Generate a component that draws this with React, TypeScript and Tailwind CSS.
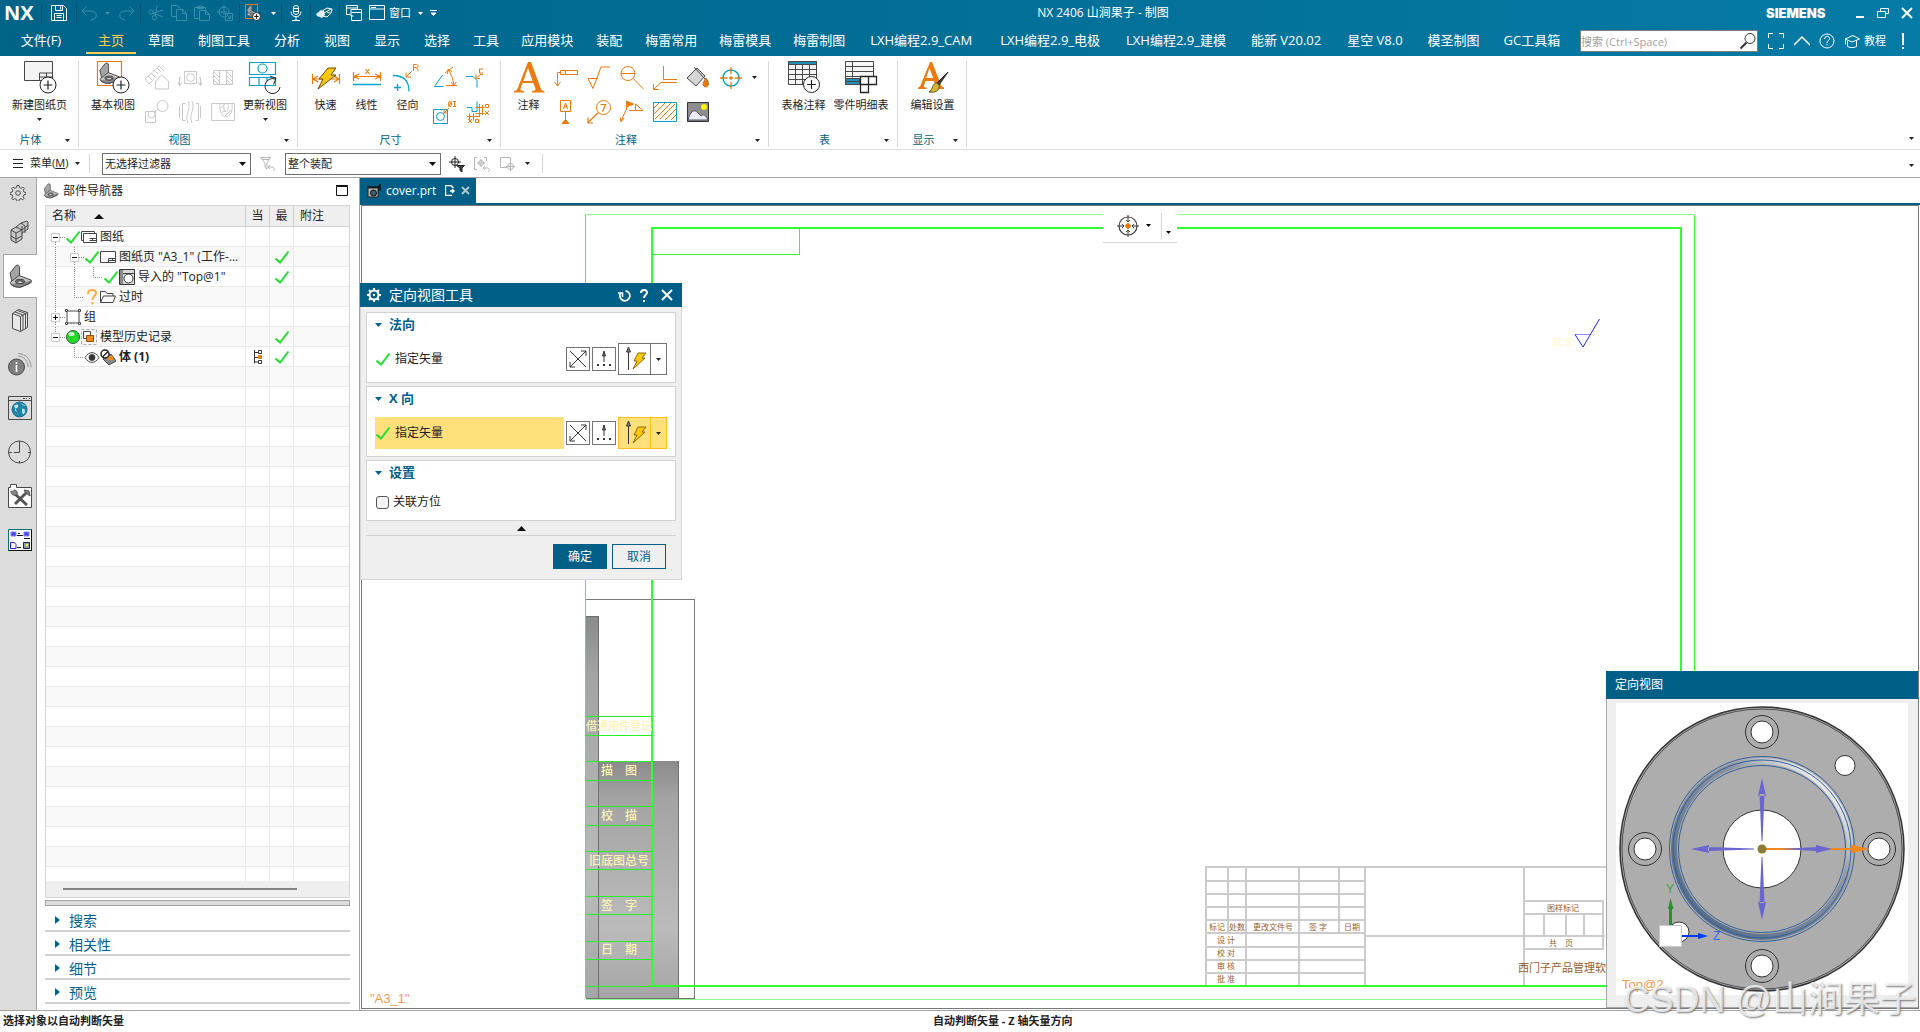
import type { ReactNode } from "react";
import clsx from "clsx";

const ORANGE = "#ec7a0c";
const CYAN = "#00a3cc";
const DARK = "#464646";
const GREEN = "#2fff2f";

type IconProps = { w: number; h?: number; className?: string; children: ReactNode };

function Icon({ w, h = w, className, children }: IconProps) {
  return (
    <svg
      width={w}
      height={h}
      viewBox={`0 0 ${w} ${h}`}
      fill="none"
      stroke="currentColor"
      aria-hidden="true"
      className={clsx("block shrink-0", className)}
    >
      {children}
    </svg>
  );
}

function Caret({ className }: { className?: string }) {
  return (
    <Icon w={5} h={3} className={className}>
      <path d="M0 0h5L2.500 3z" fill="currentColor" stroke="none" />
    </Icon>
  );
}

function Check() {
  return (
    <Icon w={16} className="text-[#25dd32]">
      <path d="M1.500 9.500l4.500 4L14.500 2.500" strokeWidth="2" />
    </Icon>
  );
}

/* Grey sheet metal bracket, used all over the place */
function PartShape() {
  return (
    <g stroke="#444" strokeWidth="1">
      <path d="M2 9L8 1.500c2-1 3.500 0 3.500 2V12L4 18z" fill="#a4a4a4" />
      <path d="M4 17l7-5.500 12 4.500c1 2 0 3-1.500 3.500L13 23c-4 .5-8-.5-10-2.500C1.500 18.500 2.500 17.500 4 17z" fill="#c4c4c4" />
      <path d="M3 20c3 3 7 3.500 10 3l9-4v-2" fill="#8a8a8a" />
      <ellipse cx="12" cy="17.500" rx="4.500" ry="2.200" fill="#777" />
      <ellipse cx="12" cy="18.200" rx="3" ry="1.300" fill="#e6e6e6" />
    </g>
  );
}

function PartIcon({ size }: { size: number }) {
  return (
    <svg width={size} height={size} viewBox="0 0 25 25" aria-hidden="true" className="block shrink-0">
      <PartShape />
    </svg>
  );
}

function PlusBadge({ x, y, r = 8 }: { x: number; y: number; r?: number }) {
  return (
    <g stroke="#222">
      <circle cx={x} cy={y} r={r} fill="#fff" />
      <path d={`M${x - r * 0.55} ${y}h${r * 1.1}M${x} ${y - r * 0.55}v${r * 1.1}`} strokeWidth="1.200" />
    </g>
  );
}

function Bolt() {
  return <path d="M15 1h8l-5 7h5L5 22l5-10H6z" fill="#fdc70c" stroke="#6b4a00" />;
}

/* ---------- title bar ---------- */

function Sep() {
  return <div className="h-[19px] w-px bg-[#00506f]" />;
}

type QuickProps = { label: string; className: string; disabled?: boolean; children: ReactNode };

function Quick({ label, className, disabled, children }: QuickProps) {
  return (
    <button
      type="button"
      aria-label={label}
      disabled={disabled}
      className={clsx("flex h-6 items-center justify-center", disabled && "text-[#3a8fae]", className)}
    >
      {children}
    </button>
  );
}

function TitleBar() {
  return (
    <div className="flex h-[26px] items-center">
      <div className="w-[41px] pl-1 text-[20px] leading-6 font-bold">NX</div>
      <Sep />
      <Quick label="保存" className="w-[34px]">
        <Icon w={16}>
          <path d="M.5.5h12l3 3v12H.5zM4.500.5v5h7v-5M9.500 1.500v3M3.500 15.500v-7h9v7M5.500 10.500h5M5.500 12.500h5" />
        </Icon>
      </Quick>
      <Sep />
      <Quick label="撤销" className="w-6" disabled>
        <Icon w={16}>
          <path d="M5.500 1.500L1 6l4.500 4.500M1 6h9c7 0 7 8.500 0 9" />
        </Icon>
      </Quick>
      <Quick label="撤销列表" className="w-3" disabled>
        <Caret />
      </Quick>
      <Quick label="重做" className="w-[27px]" disabled>
        <Icon w={16}>
          <path d="M10.500 1.500L15 6l-4.500 4.500M15 6H6c-7 0-7 8.500 0 9" />
        </Icon>
      </Quick>
      <Sep />
      <div className="flex w-[98px] justify-center">
        <Quick label="剪切" className="w-[23px]" disabled>
          <Icon w={16}>
            <circle cx="3" cy="7" r="2.200" />
            <circle cx="6.500" cy="12.500" r="2.200" />
            <path d="M4.500 8.500L15.500 5M7 10.500L9.500 0M5 8l10 4" />
          </Icon>
        </Quick>
        <Quick label="复制" className="w-[23px]" disabled>
          <Icon w={16}>
            <path d="M5.500 11.500h-5V.5h6l3 3v1M5.500 4.500h6l4 4v7h-10zM11.500 4.500v4h4" />
          </Icon>
        </Quick>
        <Quick label="粘贴" className="w-[23px]" disabled>
          <Icon w={16}>
            <path d="M5.500 13.500h-5v-11h11v3M3.500 3.500v-2h2c0-1.500 2-1.500 2 0h2v2zM5.500 5.500h6l4 4v6h-10zM11.500 5.500v4h4" />
          </Icon>
        </Quick>
        <Quick label="移动对象" className="w-[23px]" disabled>
          <Icon w={16}>
            <circle cx="7" cy="7" r="5" />
            <path d="M7 0v10M0 7h10M8.500 8.500h7v7h-7zM10.500 10.500l3 3m0-3v3h-3" />
          </Icon>
        </Quick>
      </div>
      <Sep />
      <Quick label="基本视图" className="w-[25px]">
        <Icon w={18}>
          <path d="M1.500.5h12v14h-12z" stroke={ORANGE} />
          <g transform="translate(2 1) scale(.5)">
            <PartShape />
          </g>
          <PlusBadge x={12.500} y={12.500} r={4} />
        </Icon>
      </Quick>
      <Quick label="基本视图列表" className="w-4">
        <Caret />
      </Quick>
      <Sep />
      <Quick label="语音" className="w-7">
        <Icon w={14} h={16}>
          <rect x="4.500" y=".5" width="5" height="9" rx="2.500" />
          <path d="M2 6.500c0 7 10 7 10 0M7 12v3.500M3 15.500h8M5 3.500h4M5 6.500h4" />
        </Icon>
      </Quick>
      <Sep />
      <Quick label="触控模式" className="w-7">
        <Icon w={18} h={14}>
          <path d="M0 8l5-4 3 1 1 4-3 3-5-2z" fill="#dfe8ec" stroke="none" />
          <path d="M7 4.500l4-2.500 5 1-1 4-4 4-4-1z M8 7l7-4M11 6l3 1" />
        </Icon>
      </Quick>
      <Sep />
      <Quick label="切换窗口" className="w-7">
        <Icon w={16}>
          <path d="M4.500 9.500h-4v-9h11v4M.5 3h11M7.500 11H5v-6.500h10.500v11h-10v-5M5.500 7.500h10" />
        </Icon>
      </Quick>
      <button type="button" className="flex w-[58px] items-center gap-1 pl-px text-[11px] leading-4">
        <Icon w={16}>
          <path d="M.5.5h15v14H.5zM.5 4h15M2 2.500h5" />
        </Icon>
        窗口
        <Caret className="ml-[3px]" />
      </button>
      <Quick label="自定义工具条" className="w-[14px]">
        <Icon w={7} h={6}>
          <path d="M0 .5h7M1 3h5L3.500 5.500z" fill="currentColor" />
        </Icon>
      </Quick>
      <h1 className="flex-1 text-center text-[12px] leading-5">NX 2406 山涧果子 - 制图</h1>
      <div className="w-[88px] text-[13px] leading-5 font-black [font-family:Inter,'Open_Sans',sans-serif]">SIEMENS</div>
      <Quick label="最小化" className="w-3">
        <Icon w={8} h={10}>
          <path d="M0 9h8" strokeWidth="2" />
        </Icon>
      </Quick>
      <Quick label="还原" className="w-[34px]">
        <Icon w={12} h={10}>
          <path d="M3.500 3V.5h8v5H9M.5 3.500h8v6h-8z" />
        </Icon>
      </Quick>
      <Quick label="关闭" className="mr-[7px] w-[13px]">
        <Icon w={12}>
          <path d="M1 1l10 10M11 1L1 11" strokeWidth="2" />
        </Icon>
      </Quick>
    </div>
  );
}

type Tab = { name: string; pad: string };

const tabs: Tab[] = [
  { name: "主页", pad: "px-3" },
  { name: "草图", pad: "px-3" },
  { name: "制图工具", pad: "px-3" },
  { name: "分析", pad: "px-3" },
  { name: "视图", pad: "px-3" },
  { name: "显示", pad: "px-3" },
  { name: "选择", pad: "px-3" },
  { name: "工具", pad: "px-[11px]" },
  { name: "应用模块", pad: "px-[11px]" },
  { name: "装配", pad: "px-3" },
  { name: "梅雷常用", pad: "px-[11px]" },
  { name: "梅雷模具", pad: "px-[11px]" },
  { name: "梅雷制图", pad: "px-[11px]" },
  { name: "LXH编程2.9_CAM", pad: "px-[14px]" },
  { name: "LXH编程2.9_电极", pad: "px-[14px]" },
  { name: "LXH编程2.9_建模", pad: "px-3" },
  { name: "能新 V20.02", pad: "px-[13px]" },
  { name: "星空 V8.0", pad: "px-[13px]" },
  { name: "模圣制图", pad: "px-3" },
  { name: "GC工具箱", pad: "px-3" },
];

function MenuRow() {
  return (
    <div className="flex h-[30px] items-start whitespace-nowrap text-[13px]">
      <button type="button" className="h-[28px] w-[86px] pr-1 leading-[28px]">
        文件(F)
      </button>
      <nav className="flex flex-1">
        {tabs.map(({ name, pad }) => (
          <button
            key={name}
            type="button"
            className={clsx(
              "h-[28px] border-b-2 leading-[28px]",
              pad,
              name === "主页" ? "border-[#ffcc4d] text-[#ffcc4d]" : "border-transparent",
            )}
          >
            {name}
          </button>
        ))}
      </nav>
      <div className="relative mt-1 w-[178px] shrink-0 text-[#333]">
        <input
          type="text"
          aria-label="搜索"
          placeholder="搜索 (Ctrl+Space)"
          className="block h-[22px] w-full border border-[#7d7d7d] bg-white text-[11px] leading-5 placeholder:text-[#9f9f9f]"
        />
        <Icon w={18} className="absolute top-[2px] right-[1px]">
          <circle cx="11" cy="6.500" r="5" />
          <path d="M7.500 10.500L1.500 16.500" strokeWidth="2" />
        </Icon>
      </div>
      <Quick label="全屏" className="mt-[3px] w-[36px]">
        <Icon w={16}>
          <path d="M5 .5H.5V5M11 .5h4.500V5M.5 11v4.500H5M15.500 11v4.500H11" />
        </Icon>
      </Quick>
      <Quick label="最小化功能区" className="mt-[3px] w-4">
        <Icon w={16} h={10}>
          <path d="M0 9l8-8 8 8" strokeWidth="1.500" />
        </Icon>
      </Quick>
      <Quick label="帮助" className="mt-[3px] w-[34px]">
        <Icon w={16}>
          <circle cx="8" cy="8" r="7" />
          <path d="M5.500 6c0-3.500 5-3.500 5-.5 0 2-2.500 2-2.500 4.500M8 11v1.500" />
        </Icon>
      </Quick>
      <button type="button" className="mt-[3px] flex h-6 items-center gap-1 text-[11px]">
        <Icon w={16} h={14}>
          <path d="M1 5l8-3.500L15.500 5 8 8zM3.500 7v5.500c3 1.500 6 1.500 9 0V6.500M1.500 5.500v5" />
        </Icon>
        教程
      </button>
      <Quick label="提醒" className="mt-[3px] w-[34px]">
        <Icon w={2} h={16}>
          <path d="M1 0v12M1 14v2" strokeWidth="2" />
        </Icon>
      </Quick>
    </div>
  );
}

/* ---------- ribbon ---------- */

type BigProps = { label: string; className: string; caret?: boolean; children: ReactNode };

function Big({ label, className, caret, children }: BigProps) {
  return (
    <button type="button" className={clsx("flex flex-col items-center text-[11px] whitespace-nowrap", className)}>
      <Icon w={34}>{children}</Icon>
      <span className="leading-[20px]">{label}</span>
      {caret && <Caret className="mt-[3px]" />}
    </button>
  );
}

function Small({ label, children }: { label: string; children: ReactNode }) {
  return (
    <button type="button" aria-label={label} className="flex h-[34px] w-[33px] items-center justify-center">
      <Icon w={24}>{children}</Icon>
    </button>
  );
}

function Group({ title, children }: { title: string; children: ReactNode }) {
  return (
    <section className="flex h-[86px] flex-col justify-between border-r border-[#d9d9d9]">
      <div className="flex h-[70px] items-start pr-[6px] pl-[7px]">{children}</div>
      <div className="flex h-[14px] items-center pl-[5px] text-[11px] leading-[14px]">
        <h2 className="flex-1 text-center text-[#00607f]">{title}</h2>
        <button type="button" aria-label={`${title}选项`} className="flex w-[22px] items-center justify-center">
          <Caret />
        </button>
      </div>
    </section>
  );
}

function Ribbon() {
  return (
    <div className="flex h-[94px] items-start border-b border-[#dcdcdc] bg-white pt-[5px] text-[#222]">
      <Group title="片体">
        <Big label="新建图纸页" className="w-[65px]" caret>
          <path d="M1.500.5h28v19h-28z" fill="#f4f4f4" stroke={DARK} />
          <path d="M16.500 12h13M16.500 16h13M16.500 12v7M23.500 12v4" stroke={DARK} />
          <PlusBadge x={25} y={24} />
        </Big>
      </Group>

      <Group title="视图">
        <Big label="基本视图" className="w-[54px]">
          <path d="M1.500.5h24v24h-24z" stroke={ORANGE} strokeWidth="1.200" />
          <g transform="translate(2 1) scale(.92)">
            <PartShape />
          </g>
          <PlusBadge x={25} y={24} />
        </Big>
        <div className="grid grid-cols-3 text-[#c9c9c9]">
          <Small label="投影视图">
            <path d="M0 13L14 0l5 5M0 13l4 5 5-5M3 10l4 4M6 7l4 4M9 4l4 4M12 2l4 4M10.500 15l6-6 7 6v8h-13z" />
          </Small>
          <Small label="剖视图">
            <path d="M6.500 5.500h12v12h-12zM3 11.500H1.500v8M0 16l1.500 4 2.500-4M21 11.500h1.500v8M20 16l2.500 4 1.500-4" />
            <circle cx="12.500" cy="11.500" r="4" />
          </Small>
          <Small label="局部剖">
            <path d="M2.500 4.500h19v14h-19zM8.500 4.500v14M15.500 4.500v14M3 6l5 5M3 10l5 5M3 14l4 4M16 6l5 5M16 10l5 5M16 14l4 4" />
          </Small>
          <Small label="局部放大图">
            <circle cx="17.500" cy="6" r="5.500" />
            <circle cx="6.500" cy="14.500" r="3.500" />
            <path d="M.5 11.500h10v11H.5zM9 12l5-3" />
          </Small>
          <Small label="断开视图">
            <path d="M1.500 6v12M4.500 3.500v17M4.500 3.500h3M4.500 20.500h3M10 1c4 7-4 14 0 22M14 1c4 7-4 14 0 22M18 3.500h2.500v17H18M22.500 6v12" />
          </Small>
          <Small label="局部剖视图">
            <path d="M.5 3.500h23v17H.5zM9 3.500c-1 8 2 13 6 13s7-5 6-13M13 4c-1 6 1 8 2 8s3-3 2-8M10 8l4-4M11 12l4-1M14 16l6-6" />
          </Small>
        </div>
        <Big label="更新视图" className="w-[52px]" caret>
          <g stroke={CYAN} strokeWidth="1.200">
            <path d="M1.500 1.500h26v12h-26zM1.500 16.500h26v8h-26zM11 16.500v8M19 16.500v4" />
            <circle cx="14.500" cy="7.500" r="4.500" />
          </g>
          <path d="M27 18a7.500 7.500 0 1 0 5 8" fill="none" stroke="#222" />
          <path d="M22 15l6 2.500-2.500 6" stroke="#222" />
        </Big>
      </Group>

      <Group title="尺寸">
        <Big label="快速" className="w-[41px]">
          <path d="M3.500 13v10M30.500 13v10M4 18h26M9 15l-5 3 5 3M25 15l5 3-5 3" stroke={ORANGE} strokeWidth="1.200" />
          <g transform="translate(4 6)">
            <Bolt />
          </g>
        </Big>
        <Big label="线性" className="w-[41px]">
          <path
            d="M3.500 11v9M30.500 11v9M4 15.500h26M9 13l-5 2.500L9 18M25 13l5 2.500-5 2.500M15.500 8l4 5M19.500 8l-4 5"
            stroke={ORANGE}
            strokeWidth="1.200"
          />
          <path d="M3 23.500h28" stroke={CYAN} strokeWidth="1.500" />
        </Big>
        <Big label="径向" className="w-[41px]">
          <path d="M2 14.500c10 0 16 5 16 16M3 26.500h7M6.500 23v7" stroke={CYAN} strokeWidth="1.300" />
          <path d="M21 10l-6 6M15 11.500V16h5M22.500 10V3.500h3c2 0 2 3 0 3h-3M25.500 6.500l2 3.500" stroke={ORANGE} />
        </Big>
        <div className="grid grid-cols-2">
          <Small label="角度尺寸">
            <path d="M9.500 9L1.500 20.500h9" stroke={CYAN} />
            <path d="M12 7l8-6M15 3.500c3 4 5 9 6 16M14.500 8l.5-4.500 4 2M13 19.500h11M18 16l3 4 2-4" stroke={ORANGE} />
          </Small>
          <Small label="倒斜角尺寸">
            <path d="M0 10.500h7l4 4v7" stroke={CYAN} />
            <path d="M17 8.500h-3l-4 4M10 8.500v4h4M17 3h-3.500v4H17" stroke={ORANGE} />
          </Small>
          <Small label="厚度尺寸">
            <path d="M.5 9.500h14v14H.5z" stroke={CYAN} />
            <circle cx="7.500" cy="16.500" r="4" stroke={CYAN} />
            <path d="M11 13l5-5M11 9v4h4M20 1.500h3M21.500 1.500v5M20 6.500h3M15.500 6.500l3.500-5" stroke={ORANGE} />
            <ellipse cx="17" cy="4" rx="1.500" ry="2.500" stroke={ORANGE} />
          </Small>
          <Small label="坐标尺寸">
            <path d="M1 7.500h5v4h5v-10" stroke={CYAN} />
            <path
              d="M9.500 7.500h9M9.500 13.500h9M13.500 4v13M16.500 5v10M1 16.500h12M3.500 13.500v7M7.500 13.500v7M2 19l4 4M6 19l-4 4M9.500 19.500h3v3h-3zM19.500 4.500h3v3h-3zM19 11l4 4M23 11l-4 4"
              stroke={ORANGE}
            />
          </Small>
        </div>
      </Group>

      <Group title="注释">
        <Big label="注释" className="w-[41px]">
          <path
            d="M16 1h3l10 27c.6 1.500 1.500 2 3.500 2v1.500H20V30c3 0 4-.7 3.300-2.700l-2-5.300H10.500l-1.800 5c-.7 2 0 3 3.300 3v1.500H2V30c2 0 3-1 4-3.500zM16 7l-4.700 13h9.300z"
            fill={ORANGE}
            stroke="none"
          />
        </Big>
        <div className="grid grid-cols-6 text-[#ec7a0c]">
          <Small label="特征控制框">
            <path d="M6.500 4.500h17v4h-17zM11.500 4.500v4M6.500 6.500h-3v13M.5 16l3 4 3-4" />
          </Small>
          <Small label="表面粗糙度">
            <path d="M1 12.500h10M1 12.500l5 10 8-21.500h9" />
          </Small>
          <Small label="剖切线">
            <circle cx="8" cy="7.500" r="7" />
            <path d="M1 7.500h14M13 12.500L24 23.500" />
          </Small>
          <Small label="焊接符号">
            <path d="M10.500 0v13.500h13.500M24 16.500H8L.5 23.500M.5 18v5.500H6" />
          </Small>
          <Small label="区域填充">
            <path d="M1 12L11 2l8 8-9 10z" fill="#d5d5d5" stroke={DARK} />
            <path d="M8 1l11 12" stroke={DARK} />
            <path d="M20 12c-6 8-1 9 0 9s5-2 0-9z" fill={ORANGE} stroke="#a85a10" strokeWidth=".8" />
          </Small>
          <Small label="中心标记">
            <circle cx="12" cy="12" r="8" stroke={CYAN} strokeWidth="1.500" />
            <path d="M12 1v7M12 16v7M1 12h7M16 12h7M12 10v4M10 12h4" strokeWidth="1.300" />
          </Small>
          <Small label="基准特征符号">
            <path d="M6.500.5h10v11h-10zM11.500 12v9M9.500 9l2-6 2 6M10 7h3" />
            <path d="M8 23.500l3.500-4 3.500 4z" fill={ORANGE} />
          </Small>
          <Small label="符号标注">
            <circle cx="16.500" cy="7.500" r="7" />
            <path d="M13.500 4.500h5l-3 7M11.500 12.500L1 22.500M1 17.500v5.500h5" strokeWidth="1.200" />
          </Small>
          <Small label="相交符号">
            <path d="M6.500 1v8L1 21M0 17l1 5 3-4M9 10.500h14L15.500 4v6" />
            <path d="M6.500 1l7 3-7 3z" fill={ORANGE} />
          </Small>
          <Small label="剖面线">
            <path d="M1 8l5-5M1 14L12 3M2 19L18 3M7 19L22 4M12 20L23 9M18 20l5-5" />
            <path d="M.5 2.500h23v19H.5z" stroke={CYAN} />
          </Small>
          <Small label="图像">
            <path d="M1.500 2.500h21v19h-21z" fill="#8d8d8d" stroke="#333" />
            <circle cx="18" cy="7" r="3" fill="#fff200" stroke="none" />
            <path d="M2 20c2-8 6-12 10-7l3 3c3-3 5 0 7 4z" fill="#e8ecf4" stroke="#556" />
          </Small>
        </div>
        <button type="button" aria-label="更多注释" className="flex h-[32px] w-[15px] items-center justify-center">
          <Caret />
        </button>
      </Group>

      <Group title="表">
        <Big label="表格注释" className="w-[55px]">
          <path d="M1.500.5h28v23h-28zM1.500 8.500h28M1.500 13.500h28M1.500 18.500h28M8.500 4v19M15.500 4v19M22.500 4v19" stroke={DARK} fill="#f6f6f6" />
          <path d="M1.500.5h28v3h-28z" fill="#2390b5" stroke={DARK} />
          <PlusBadge x={24.500} y={23.500} />
        </Big>
        <Big label="零件明细表" className="w-[60px]">
          <path d="M1.500.5h28v23h-28zM1.500 5.500h28M1.500 10.500h28M1.500 15.500h28M8.500.5v16" stroke={DARK} fill="#f6f6f6" />
          <path d="M1.500 17.500h14v6h-14zM1.500 20.500h14" fill="#2390b5" stroke={DARK} />
          <path d="M16.500 15.500h16v8h-8v8h-8zM16.500 23.500h8M24.500 15.500v8" fill="#fff" stroke="#222" strokeWidth="1.300" />
        </Big>
      </Group>

      <Group title="显示">
        <Big label="编辑设置" className="w-[55px]">
          <path
            d="M14 1h2l9 23c.5 1.500 1 2 3 2.500v1.500H17v-1.500c2.500 0 3-.5 2.500-2.300l-1.700-4.200H9.500l-1.300 4c-.7 2 0 2.500 2.300 2.500v1.500H2v-1.500c1.500-.2 2-.7 2.700-2.500zM13.500 7l-3.300 10h7z"
            fill={ORANGE}
            stroke="none"
          />
          <path d="M32 11L21 22l2 2z" fill="#444" stroke="#222" />
          <path d="M21 22c-5 0-4 7-8 9 6 1 11-1 10-7z" fill="#d8b33c" stroke="#6b5513" />
        </Big>
      </Group>
      <div className="flex h-[84px] flex-1 items-end justify-end pr-[6px] pb-[5px]">
        <Caret />
      </div>
    </div>
  );
}

/* ---------- selection bar ---------- */

function Filter({ label, options, className }: { label: string; options: string[]; className: string }) {
  return (
    <div className={clsx("relative", className)}>
      <select
        aria-label={label}
        className="block h-[22px] w-full appearance-none border border-[#6e6e6e] bg-white pl-[2px] text-[11px] leading-5"
      >
        {options.map((o) => (
          <option key={o}>{o}</option>
        ))}
      </select>
      <Icon w={7} h={4} className="pointer-events-none absolute top-[9px] right-[5px]">
        <path d="M0 0h7L3.500 4z" fill="#111" stroke="none" />
      </Icon>
    </div>
  );
}

function SelectionBar() {
  return (
    <div className="flex h-7 items-center border-b border-[#a5a5a5] bg-white text-[11px] text-[#222]">
      <button type="button" className="flex w-[89px] items-center gap-[7px] pl-[13px]">
        <Icon w={10} h={9}>
          <path d="M0 .5h10M0 4.500h10M0 8.500h10" />
        </Icon>
        <span>
          菜单(<u>M</u>)
        </span>
        <Caret />
      </button>
      <div className="h-[19px] w-px bg-[#d5d5d5]" />
      <Filter label="类型过滤器" options={["无选择过滤器"]} className="ml-3 w-[149px]" />
      <button type="button" aria-label="重置过滤器" className="flex w-[34px] justify-center text-[#b5b5b5]">
        <Icon w={18} h={16}>
          <path d="M1.500 1.500h10L8 7v6l-2-1.500V7zM3 3.500h7M11 9l-2 2 2 2M9 11h4c3 0 3 4 1 4" />
        </Icon>
      </button>
      <Filter label="选择范围" options={["整个装配"]} className="w-[156px]" />
      <div className="flex items-center gap-[9px] pl-2 text-[#b5b5b5]">
        <button type="button" aria-label="选择优先级" className="text-[#222]">
          <Icon w={16}>
            <circle cx="6" cy="6" r="3.500" />
            <path d="M6 0v12M0 6h12" />
            <path d="M7.500 9.500h8L13 12v4l-2-1.500V12z" fill="#444" />
          </Icon>
        </button>
        <button type="button" aria-label="面选择">
          <Icon w={17} h={16}>
            <path d="M3 1.500H.5v12H3M10 1.500h2.500V5M7 3v8M3 7h8M11 10l-2 2 2 2M9 12h4c3 0 3 3 1 4" />
            <circle cx="7" cy="7" r="2.500" />
          </Icon>
        </button>
        <button type="button" aria-label="捕捉点">
          <Icon w={16}>
            <path d="M7 11.500H.5v-10h10V6M10.500 6v9M6 10.500h9" />
            <circle cx="10.500" cy="10.500" r="3" />
          </Icon>
        </button>
        <Caret className="text-[#222]" />
      </div>
      <div className="ml-[12px] h-[19px] w-px bg-[#d5d5d5]" />
      <Caret className="mt-1 mr-[6px] ml-auto" />
    </div>
  );
}

/* ---------- resource bar ---------- */

function RailButton({ label, active, children }: { label: string; active?: boolean; children: ReactNode }) {
  return (
    <button
      type="button"
      aria-label={label}
      className={clsx(
        "flex h-11 items-center",
        active ? "relative -mr-px ml-[3px] border-y border-l border-[#a5a5a5] bg-white pl-1" : "w-full pl-2",
      )}
    >
      {children}
    </button>
  );
}

function Rail() {
  return (
    <div className="flex w-[37px] shrink-0 flex-col border-r border-[#a5a5a5] bg-[#dcdcdc] text-[#4a4a4a]">
      <button type="button" aria-label="资源条选项" className="mb-[2px] flex h-[30px] w-full items-center justify-center">
        <Icon w={16}>
          <path d="M7 .5h2l.4 2 1.800.8 1.700-1.100 1.400 1.400-1.100 1.700.7 1.700 2 .5v2l-2 .4-.8 1.800 1.100 1.700-1.400 1.400-1.700-1.100-1.800.7-.4 2H7l-.5-2-1.700-.8-1.700 1.100-1.400-1.400 1.100-1.700-.7-1.700-2-.4v-2l2-.5.8-1.700-1.200-1.700 1.400-1.400 1.700 1.100 1.700-.8z" />
          <circle cx="8" cy="8" r="2.300" />
        </Icon>
      </button>
      <RailButton label="装配导航器">
        <Icon w={24}>
          <path d="M3 10l5-3 5-4 6-2 1 1v7l-6 4v6l-6 4-5-3z" fill="#c6c6c6" />
          <path d="M3 10l5 3v10M8 13l6-3V6M14 10v4M3 16l5 3 6-3M8 7l6 3 6-5M13 3l4 3v7" />
        </Icon>
      </RailButton>
      <RailButton label="部件导航器" active>
        <PartIcon size={25} />
      </RailButton>
      <RailButton label="重用库">
        <Icon w={24}>
          <path d="M4.500 5.500l6-4 9 3v15l-7 4-8-3z" fill="#e8e8e8" />
          <path d="M4.500 5.500l8 3v15M12.500 8.500l7-4M7 4l8 3v15M9.500 2.500l8 3v15" />
        </Icon>
      </RailButton>
      <RailButton label="HD3D 工具">
        <Icon w={24}>
          <circle cx="8.500" cy="15" r="8" fill="#808080" />
          <path d="M8.500 10v2M8.500 13v7" stroke="#fff" strokeWidth="1.600" />
          <path d="M10 1.500c8 0 13 6 13 14M10 4c6 0 10 5 10 11" stroke="#9a9a9a" />
        </Icon>
      </RailButton>
      <RailButton label="Web 浏览器">
        <Icon w={24}>
          <path d="M.5.500h23v23H.500zM.500 4.500h23M15 2.500h2M18 2.500h1M21 2.500h1" />
          <circle cx="11.500" cy="13.500" r="7.500" fill="#1f84a6" stroke="#1f6a85" />
          <path d="M6 10c3-3 5-1 4 1s-3 1-3 3 3 1 3 4M13 7c1 2 3 3 5 3M14 13c3-1 4 2 2 5-2 1-2-3-2-5z" fill="#bfe2ee" stroke="none" />
        </Icon>
      </RailButton>
      <RailButton label="历史记录">
        <Icon w={24}>
          <circle cx="11.500" cy="12" r="11" />
          <path d="M11.500 1v11.500H6M11.500 21v2M1 12.500h3M20 12.500h3" />
        </Icon>
      </RailButton>
      <RailButton label="工艺向导">
        <Icon w={24}>
          <path d="M.5 23.500V3.500h2v-3h6v3h15v20z" fill="#fff" />
          <path d="M7 10l12 11M18 9L7 20" stroke="#555" strokeWidth="3" />
          <path d="M3 7c0 5 5 5 6 3s-1-4-3-4M16 6l5 1 1 5-4-3z" fill="#888" />
        </Icon>
      </RailButton>
      <RailButton label="角色">
        <Icon w={24} h={22}>
          <path d="M.5.5h23v21H.5z" fill="#fff" stroke="#107070" />
          <path d="M23.500.5v21H.5" stroke="#111" />
          <path d="M3 3h5v4H3zM16 3h5v4h-5z" fill="#4a4ae0" stroke="#7a7aff" />
          <path d="M10 4.500h2M9 6.500h6M16 9.500h6M9 18.500h4" stroke="#111" />
          <path d="M2.500 13.500h4l1.500 2v4H2.500z" stroke="#2222dd" />
          <path d="M15.500 13.500h6v6h-6z" fill="#8fa2b8" stroke="#222" />
          <path d="M18 15h2v2h-2z" fill="#ffec3d" stroke="none" />
        </Icon>
      </RailButton>
    </div>
  );
}

/* ---------- part navigator ---------- */

type Guide = "blank" | "vert" | "corner" | "open-first" | "open-mid" | "open-last" | "closed-mid";

function GuideCell({ kind }: { kind: Guide }) {
  const box = kind.startsWith("open") || kind.startsWith("closed");
  return (
    <svg width="19" height="20" className="block shrink-0" fill="none" stroke="#8c8c8c" aria-hidden="true">
      {kind === "vert" && <path d="M9.500 0v20" strokeDasharray="1 1" />}
      {kind === "corner" && <path d="M9.500 0v10.500H19" strokeDasharray="1 1" />}
      {(kind.endsWith("mid") || kind === "open-last") && <path d="M9.500 0v6" strokeDasharray="1 1" />}
      {(kind.endsWith("mid") || kind === "open-first") && <path d="M9.500 15v5" strokeDasharray="1 1" />}
      {box && <path d="M14 10.500h5" strokeDasharray="1 1" />}
      {box && <path d="M5.500 6.500h8v8h-8z" fill="#fff" stroke="#c9c9c9" />}
      {box && <path d={kind.startsWith("closed") ? "M7 10.500h5M9.500 8v5" : "M7 10.500h5"} stroke="#111" />}
    </svg>
  );
}

const sheetsIcon = (
  <Icon w={16} className="text-[#444]">
    <path d="M2.500 11.500h-2v-9h13v2M2.500 4.500h13v9h-13zM8.500 9.500h7M8.500 11.500h7M11.500 9.500v2" fill="#fff" />
  </Icon>
);

const sheetIcon = (
  <Icon w={16} className="text-[#444]">
    <path d="M.5 2.500h15v11H.5zM8.500 9.500h7M8.500 11.500h7M8.500 9.500v4M12.500 9.500v2" fill="#fff" />
  </Icon>
);

const importedIcon = (
  <Icon w={16}>
    <path d="M.5.5h15v15H.5z" fill="#d9d9d9" stroke="#333" />
    <path d="M1 1h3v14H1z" fill="#888" stroke="none" />
    <path d="M4 4.500h11" stroke="#444" />
    <circle cx="9.500" cy="9.500" r="4.500" fill="#fff" stroke="#333" />
  </Icon>
);

const folderIcon = (
  <Icon w={16} className="text-[#444]">
    <path d="M.5 13.500v-11h5l1.500 2h6v2.500M.5 13.500l3-6.500h12l-2.500 6.500z" />
  </Icon>
);

const groupIcon = (
  <Icon w={16} className="text-[#444]">
    <path d="M2 2h12v12H2z" />
    <path d="M.5.5h2v2h-2zM13.500.5h2v2h-2zM.5 13.500h2v2h-2zM13.500 13.500h2v2h-2z" fill="#fff" />
  </Icon>
);

const historyIcon = (
  <Icon w={16}>
    <path d="M.5.5h15v15H.5z" stroke="#aaa" strokeDasharray="3 2" />
    <path d="M2.500 2.500h7v7h-7z" fill="#fff" stroke="#444" />
    <path d="M5.500 6.500h7v6h-7z" fill="#f08a1a" stroke="#9c4d00" />
  </Icon>
);

const bodyIcon = (
  <Icon w={16}>
    <path d="M3 10l8-5 5 7-7 4z" fill="#8b8b8b" stroke="#444" />
    <path d="M8 7h5v4H8z" fill="#f08a1a" stroke="none" />
    <circle cx="5" cy="5" r="4" fill="#fff" stroke="#222" strokeWidth="1.500" />
    <path d="M2.500 8L8 2.500" stroke="#222" strokeWidth="1.500" />
  </Icon>
);

const ballIcon = (
  <Icon w={16}>
    <circle cx="8" cy="8" r="6.500" fill="#22d92c" stroke="#3a5a3a" />
    <ellipse cx="6.500" cy="5" rx="3" ry="2" fill="#c8ffca" stroke="none" />
  </Icon>
);

const eyeIcon = (
  <Icon w={16} className="text-[#444]">
    <path d="M1 8.500c4-6.500 10-6.500 14 0-4 6.500-10 6.500-14 0z" />
    <circle cx="8" cy="8.500" r="3" fill="#333" />
  </Icon>
);

const lateIcon = (
  <Icon w={16} className="text-[#ffae42]">
    <path d="M4 5c0-5.500 9-5 8-.5C11.500 7 8.500 7 8.500 11M8.500 13v2.500" strokeWidth="2" />
  </Icon>
);

const linkIcon = (
  <Icon w={8} h={14} className="mx-auto text-[#333]">
    <path d="M.5 0v13.500M1 2.500h3M1 7.500h3M1 12h3M4.500.5h3v3h-3zM4.500 10.500h3v3h-3z" />
    <path d="M4.500 5.500h3v3h-3z" fill={ORANGE} stroke={ORANGE} />
  </Icon>
);

type TreeRow = {
  name: string;
  guides: Guide[];
  mark?: ReactNode;
  icon: ReactNode;
  bold?: boolean;
  linked?: boolean;
  latest?: boolean;
};

const treeRows: TreeRow[] = [
  { name: "图纸", guides: ["open-first"], mark: <Check />, icon: sheetsIcon },
  { name: '图纸页 "A3_1" (工作-...', guides: ["vert", "open-mid"], mark: <Check />, icon: sheetIcon, latest: true },
  { name: '导入的 "Top@1"', guides: ["vert", "vert", "corner"], mark: <Check />, icon: importedIcon, latest: true },
  { name: "过时", guides: ["vert", "corner"], mark: lateIcon, icon: folderIcon },
  { name: "组", guides: ["closed-mid"], icon: groupIcon },
  { name: "模型历史记录", guides: ["open-last"], mark: ballIcon, icon: historyIcon, latest: true },
  { name: "体 (1)", guides: ["blank", "corner"], mark: eyeIcon, icon: bodyIcon, bold: true, linked: true, latest: true },
];

const emptyRows = Array.from({ length: 26 }, (_, i) => i);

function Navigator() {
  return (
    <aside className="flex w-[322px] shrink-0 flex-col bg-white pr-[9px] pl-2 text-[12px] text-[#222]">
      <div className="-ml-[2px] flex h-[27px] shrink-0 items-center gap-1 pr-[2px] pb-[2px]">
        <PartIcon size={16} />
        <h2 className="flex-1 leading-5">部件导航器</h2>
        <button type="button" aria-label="浮动面板">
          <Icon w={12} h={11}>
            <path d="M.5 1.500h11v9H.500zM0 .5h12" stroke="#111" />
          </Icon>
        </button>
      </div>

      <div className="flex min-h-0 flex-1 flex-col border border-[#d5d5d5]">
        <div className="min-h-0 flex-1 overflow-hidden">
          <table className="w-full table-fixed border-separate border-spacing-0 text-left">
            <colgroup>
              <col />
              <col className="w-6" />
              <col className="w-6" />
              <col className="w-[55px]" />
            </colgroup>
            <thead className="bg-[#efefef]">
              <tr className="h-[21px] *:border-b *:border-[#cfcfcf] *:p-0 *:font-normal">
                <th className="border-r pl-[6px]!">
                  <span className="flex items-center gap-[18px]">
                    名称
                    <Icon w={10} h={5}>
                      <path d="M0 5h10L5 0z" fill="#111" stroke="none" />
                    </Icon>
                  </span>
                </th>
                <th className="border-r text-center">当</th>
                <th className="border-r text-center">最</th>
                <th className="pl-[6px]!">附注</th>
              </tr>
            </thead>
            <tbody>
              {treeRows.map((row) => (
                <tr key={row.name} className="h-5 *:border-b *:border-[#e9e9e9] *:p-0 even:bg-[#f9f9f9]">
                  <td className="border-r">
                    <div className="flex h-[19px] items-center overflow-hidden whitespace-nowrap">
                      {row.guides.map((g, i) => (
                        <GuideCell key={i} kind={g} />
                      ))}
                      {row.mark}
                      {row.icon}
                      <span className={clsx("pl-[3px] leading-[19px]", row.bold && "font-bold")}>{row.name}</span>
                    </div>
                  </td>
                  <td className="border-r">{row.linked && linkIcon}</td>
                  <td className="border-r">
                    <div className="flex justify-center">{row.latest && <Check />}</div>
                  </td>
                  <td />
                </tr>
              ))}
              {emptyRows.map((i) => (
                <tr key={i} className="h-5 *:border-b *:border-[#e9e9e9] *:p-0 even:bg-[#f9f9f9]">
                  <td className="border-r" />
                  <td className="border-r" />
                  <td className="border-r" />
                  <td />
                </tr>
              ))}
            </tbody>
          </table>
        </div>
        <div className="flex h-4 items-center bg-[#efefef] pl-[17px]">
          <div className="h-[2px] w-[234px] bg-[#858585]" />
        </div>
      </div>
      <div className="mt-[2px] h-[6px] shrink-0 border border-[#a5a5a5] bg-[#dcdcdc]" />
      <div className="mb-[6px] pt-[2px] text-[14px] text-[#00608a]">
        {["搜索", "相关性", "细节", "预览"].map((title) => (
          <button
            key={title}
            type="button"
            className="flex h-6 w-full items-end gap-[9px] border-b-2 border-[#d0d0d0] pl-[10px] leading-[18px]"
          >
            <Icon w={5} h={8} className="mb-[6px]">
              <path d="M0 0v8l5-4z" fill="currentColor" stroke="none" />
            </Icon>
            {title}
          </button>
        ))}
      </div>
    </aside>
  );
}

/* ---------- graphics window ---------- */

const stripLines = [716, 735, 761, 780, 806, 825, 851, 869, 896, 914, 941, 959, 986];

const stripTexts: [number, number, string][] = [
  [601, 775, "描　图"],
  [601, 820, "校　描"],
  [589, 865, "旧底图总号"],
  [601, 910, "签　字"],
  [601, 954, "日　期"],
];

const blockTexts: [number, number, string][] = [
  [1209, 930, "标记"],
  [1229, 930, "处数"],
  [1253, 930, "更改文件号"],
  [1309, 930, "签 字"],
  [1344, 930, "日期"],
  [1217, 943, "设 计"],
  [1217, 956, "校 对"],
  [1217, 969, "审 核"],
  [1217, 982, "批 准"],
  [1547, 911, "图样标记"],
  [1549, 946, "共　页"],
];

/* User units are screen pixels, with the origin at the window corner. */
function Sheet() {
  return (
    <svg
      viewBox="362 206 1556 802"
      preserveAspectRatio="xMinYMin meet"
      className="block h-full w-full"
      fill="none"
      shapeRendering="crispEdges"
    >
      <defs>
        <linearGradient id="thin" x1="0" y1="0" x2="0" y2="1">
          <stop offset="0" stopColor="#8a8a8a" />
          <stop offset=".15" stopColor="#a3a3a3" />
          <stop offset=".7" stopColor="#bbbbbb" />
          <stop offset="1" stopColor="#a5a5a5" />
        </linearGradient>
      </defs>
      <path d="M586 599.500h108.500V998" stroke="#7b7b7b" />
      <path d="M586 616h13v382h-13z" fill="url(#thin)" />
      <path d="M599 761h80v237h-80z" fill="url(#thin)" />
      <path d="M586 616.500h12.500V998M678.500 761v237M586 998.500h109" stroke="#6f6f6f" />

      <path d="M585.500 998V214.500" stroke={GREEN} />
      <path d="M585 214.500h1109" stroke="#8dff8d" />
      <path d="M1694.500 215v784" stroke={GREEN} />
      <path d="M585 999h1109" stroke="#8dff8d" />
      <path d="M652 228h1029v758H652z" stroke={GREEN} strokeWidth="2" />
      <path d="M652 254.500h147.500V229" stroke={GREEN} />
      {stripLines.map((y) => (
        <path key={y} d={`M586 ${y + 0.5}h66`} stroke="#25f225" />
      ))}

      <path
        d="M1206 985V867h400M1206 880.500h159M1206 893.500h159M1206 906.500h159M1206 920h159M1206 933h159M1206 946.500h159M1206 959.500h159M1206 972.500h159M1228 867v66M1246 867v118M1299 867v118M1339 867v66M1365 867v118M1365 936h240M1524 867v118M1524 901h80M1524 914h80M1524 949h80M1544 914v22M1566 914v22M1584 914v22M1603 901v48"
        stroke="#cbcbcb"
        strokeWidth="2"
      />
      <g fill="#94602f" className="text-[8px]">
        {blockTexts.map(([x, y, t]) => (
          <text key={t} x={x} y={y}>
            {t}
          </text>
        ))}
        <text x="1518" y="972" className="text-[11px]">
          西门子产品管理软件
        </text>
      </g>
      <g fill="#fbf3b4" className="text-[12px] font-medium">
        <text x="586" y="730" className="text-[11px]">
          借通用件登记
        </text>
        {stripTexts.map(([x, y, t]) => (
          <text key={t} x={x} y={y}>
            {t}
          </text>
        ))}
        <text x="1552" y="346" fill="#fff6d2" className="text-[10px]">
          其 余
        </text>
      </g>
      <g shapeRendering="auto">
        <path d="M1575 334.500h16" stroke="#8a8aff" />
        <path d="M1575 334.500l8 12.500 16.500-28" stroke="#2525e0" />
      </g>
      <text x="370" y="1003" fill="#f39a4e" className="text-[13px] [font-family:'Liberation_Sans',sans-serif]">
        "A3_1"
      </text>
    </svg>
  );
}

function ViewBarOverlay() {
  return (
    <div className="absolute top-0 left-[741px] flex h-[37px] items-center border-b border-[#d9d9d9] bg-white pt-[3px] pr-[6px] pl-[14px]">
      <button type="button" aria-label="捕捉" className="flex items-center gap-[7px]">
        <Icon w={22} className="text-[#3d3d3d]">
          <circle cx="11" cy="11" r="9" strokeWidth="1.200" />
          <path d="M11 0v7M11 15v7M0 11h7M15 11h7M9 5l2 2 2-2M9 17l2-2 2 2M5 9l2 2-2 2M17 9l-2 2 2 2" />
          <path d="M11 8l3 3-3 3-3-3z" fill={ORANGE} stroke={ORANGE} />
        </Icon>
        <Caret />
      </button>
      <div className="mr-1 ml-[10px] h-[26px] w-px bg-[#d5d5d5]" />
      <Caret className="mt-[14px]" />
    </div>
  );
}

function VectorRow({ active }: { active?: boolean }) {
  const square = "flex size-6 items-center justify-center border border-[#737373] bg-white";
  return (
    <div className="flex h-8 items-center gap-[2px]">
      <div className={clsx("flex h-8 flex-1 items-center gap-1", active && "bg-[#ffe07a]")}>
        <Check />
        <span>指定矢量</span>
      </div>
      <button type="button" aria-label="反向" className={square}>
        <Icon w={18} className="text-[#333]">
          <path d="M1 1l16 16M1 17L17 1M12 1h5v5M6 17H1v-5" />
        </Icon>
      </button>
      <button type="button" aria-label="矢量对话框" className={square}>
        <Icon w={16} className="text-[#333]">
          <path d="M8 11V4" />
          <path d="M8 0l1.500 5h-3z" fill="#777" />
          <path d="M1 14h2M7 14h2M13 14h2" strokeWidth="2" />
        </Icon>
      </button>
      <div
        className={clsx(
          "flex h-8 w-[49px] border",
          active ? "border-[#ffbf1f] bg-[#ffe07a]" : "border-[#737373] bg-white",
        )}
      >
        <button type="button" aria-label="自动判断的矢量" className="flex w-[31px] items-center justify-center">
          <Icon w={24}>
            <path d="M5.500 23V5" stroke="#333" />
            <path d="M5.500 0L7.500 5h-4z" fill="#888" stroke="#333" />
            <path d="M15 6h8l-4 5h3L10 22l4-8h-3z" fill="#fdc70c" stroke="#8a6a10" />
          </Icon>
        </button>
        <button
          type="button"
          aria-label="矢量类型"
          className={clsx(
            "flex flex-1 items-center justify-center border-l",
            active ? "border-[#ffbf1f]" : "border-[#737373]",
          )}
        >
          <Caret />
        </button>
      </div>
    </div>
  );
}

function DialogSection({ title, children }: { title: string; children: ReactNode }) {
  return (
    <section className="mb-[3px] border border-[#d2d2d2] bg-white pb-[7px] pl-2">
      <h3 className="flex h-6 items-center gap-[7px] text-[13px] font-bold text-[#00608a]">
        <Icon w={7} h={4}>
          <path d="M0 0h7L3.500 4z" fill="currentColor" stroke="none" />
        </Icon>
        {title}
      </h3>
      <div className="pt-[6px] pr-2">{children}</div>
    </section>
  );
}

function OrientDialog() {
  return (
    <div
      role="dialog"
      aria-label="定向视图工具"
      className="absolute top-[77px] left-[-2px] w-[322px] border border-t-0 border-[#d5d5d5] bg-[#efefef] text-[12px] text-[#222]"
    >
      <div className="-mx-px flex h-6 items-center bg-[#005f87] pr-[9px] pl-[7px] text-[14px] text-white">
        <Icon w={14}>
          <circle cx="7" cy="7" r="4.500" strokeWidth="2" />
          <path d="M7 0v2M7 12v2M0 7h2M12 7h2M2 2l1.500 1.500M10.500 10.500L12 12M2 12l1.500-1.500M10.500 3.500L12 2" strokeWidth="2" />
          <path d="M6 7h2" strokeWidth="2" />
        </Icon>
        <span className="flex-1 pl-[8px] leading-6">定向视图工具</span>
        <button type="button" aria-label="重置">
          <Icon w={13}>
            <path d="M7.500 1.800a5 5 0 1 1-5 2.500" strokeWidth="1.700" />
            <path d="M0 4h4.500v4" strokeWidth="1.500" />
          </Icon>
        </button>
        <button type="button" aria-label="帮助" className="pr-[13px] pl-[9px]">
          <Icon w={8} h={13}>
            <path d="M1 4c0-4 6-4 6-.5C7 6 4 6 4 9M4 11v2" strokeWidth="2" />
          </Icon>
        </button>
        <button type="button" aria-label="关闭">
          <Icon w={12}>
            <path d="M1 1l10 10M11 1L1 11" strokeWidth="2" />
          </Icon>
        </button>
      </div>
      <div className="px-[5px] pt-[5px]">
        <DialogSection title="法向">
          <VectorRow />
        </DialogSection>
        <DialogSection title="X 向">
          <VectorRow active />
        </DialogSection>
        <DialogSection title="设置">
          <label className="flex h-[22px] items-center gap-1 pl-px">
            <input
              type="checkbox"
              className="size-[13px] appearance-none rounded-[3px] border border-[#555] bg-[#f3f3f3]"
            />
            关联方位
          </label>
        </DialogSection>
        <button type="button" aria-label="收起" className="flex h-[11px] w-full items-start justify-center pt-[2px]">
          <Icon w={9} h={5}>
            <path d="M0 5h9L4.500 0z" fill="#111" stroke="none" />
          </Icon>
        </button>
        <div className="flex justify-end gap-[5px] border-t border-[#d2d2d2] pt-2 pr-[10px] pb-[10px]">
          <button type="button" className="h-[25px] w-[54px] bg-[#005f87] text-white">
            确定
          </button>
          <button type="button" className="h-[25px] w-[54px] border border-[#005f87] text-[#005f87]">
            取消
          </button>
        </div>
      </div>
    </div>
  );
}

const bolts: [number, number][] = [
  [146, 29],
  [29, 146],
  [263, 146],
  [146, 263],
];

function Preview() {
  return (
    <div className="absolute right-0 bottom-0 w-[312px] border-b border-l border-[#a5a5a5] bg-[#efefef]">
      <div className="-ml-px h-7 bg-[#005f87] pl-[9px] text-[12px] leading-7 text-white">定向视图</div>
      <div className="pt-1 pr-[10px] pb-3 pl-[9px]">
        <svg viewBox="0 0 292 292" className="block w-full bg-white" fill="none">
          <defs>
            <linearGradient id="groove" x1="1" y1="0" x2="0" y2="1">
              <stop offset="0" stopColor="#bcbcbc" />
              <stop offset=".15" stopColor="#e8e8e8" />
              <stop offset=".35" stopColor="#8b95a3" />
              <stop offset="1" stopColor="#4b6484" />
            </linearGradient>
          </defs>
          <circle cx="146" cy="146" r="142" fill="#adadad" stroke="#333" strokeWidth="1.500" />
          <circle cx="146" cy="146" r="140" stroke="#4d4d4d" />
          <circle cx="146" cy="146" r="88" stroke="url(#groove)" strokeWidth="6" />
          <circle cx="146" cy="146" r="92.500" stroke="#34609b" />
          <circle cx="146" cy="146" r="89" stroke="#34609b" />
          <circle cx="146" cy="146" r="83.500" stroke="#34609b" />
          <circle cx="146" cy="146" r="39" fill="#fff" stroke="#333" />
          {bolts.map(([x, y]) => (
            <g key={`${x}-${y}`} stroke="#333">
              <circle cx={x} cy={y} r="16.500" />
              <circle cx={x} cy={y} r="11" fill="#fff" />
            </g>
          ))}
          <circle cx="229" cy="62.500" r="10" fill="#fff" stroke="#333" />
          <circle cx="63" cy="229" r="10" fill="#fff" stroke="#333" />

          <g fill="#6a66cf" stroke="none">
            <path d="M145.500 138h1l2-47h-5zM142 93l4-18 4 18z" />
            <path d="M145.500 154h1l2 46h-5zM142 199l4 18 4-18z" />
            <path d="M138 145.500v1l-46 1.500v-4zM93 142l-18 4 18 4z" />
          </g>
          <path d="M150 146h90" stroke="#f5871f" strokeWidth="2" />
          <path d="M165 146l36-2v4zM200 142l16 4-16 4z" fill="#6a66cf" />
          <path d="M235 141.500l18 4.500-18 4.500z" fill="#f5871f" />
          <circle cx="146" cy="146" r="4.500" fill="#8c7b35" />

          <path d="M54.500 223v-20" stroke="#2a8f2f" strokeWidth="3" />
          <path d="M52 206l2.500-11 3 11z" fill="#2a8f2f" />
          <path d="M66 233h20" stroke="#0038ff" strokeWidth="2" />
          <path d="M82 230l10 3-10 3z" fill="#0038ff" />
          <path d="M43.500 222.500h22v21h-22z" fill="#fff" stroke="#c9c9c9" />
          <g className="text-[12px] [font-family:'Liberation_Sans',sans-serif]">
            <text x="50" y="190" fill="#3f9f43">
              Y
            </text>
            <text x="97" y="237" fill="#3a62ff">
              Z
            </text>
            <text x="6" y="286" fill="#f39a4e" className="text-[13px]">
              Top@2
            </text>
          </g>
        </svg>
      </div>
    </div>
  );
}

function Workspace() {
  return (
    <main className="flex min-w-0 flex-1 flex-col border-l border-[#a5a5a5] bg-white">
      <div className="flex h-[27px] shrink-0 border-b-2 border-[#005f87]">
        <div className="flex w-[116px] items-center bg-[#005f87] pr-[6px] pl-[7px] text-[12px] text-white">
          <Icon w={14}>
            <path d="M1 4h10v9H1z" fill="#b5b5b5" stroke="#222" />
            <path d="M0 3h12l1-3v6h-2" stroke="#111" strokeWidth="1.500" />
            <circle cx="6.500" cy="9" r="3" fill="#3a5f75" stroke="#111" />
          </Icon>
          <span className="flex-1 pl-[5px]">cover.prt</span>
          <Icon w={10} h={11}>
            <path d="M7 10.500H.5V.5H6l2.500 2.500M5 6h4M7 4l2 2-2 2" strokeWidth="1.400" />
          </Icon>
          <button type="button" aria-label="关闭 cover.prt" className="pl-[6px] text-[#b4c6cf]">
            <Icon w={9}>
              <path d="M1 1l7 7M8 1L1 8" strokeWidth="2" />
            </Icon>
          </button>
        </div>
      </div>
      <div className="relative mr-px mb-px ml-px min-h-0 flex-1 border border-[#787878]">
        <Sheet />
        <ViewBarOverlay />
        <OrientDialog />
        <Preview />
      </div>
    </main>
  );
}

export default function App() {
  return (
    <div className="relative flex h-screen flex-col overflow-hidden bg-white [font-family:'Open_Sans','Noto_Sans_CJK_SC',sans-serif]">
      <header className="shrink-0 bg-linear-to-r from-[#006489] to-[#057ba5] text-white">
        <TitleBar />
        <MenuRow />
      </header>
      <div className="shrink-0">
        <Ribbon />
        <SelectionBar />
      </div>
      <div className="flex min-h-0 flex-1">
        <Rail />
        <Navigator />
        <Workspace />
      </div>
      <footer className="flex h-[22px] shrink-0 items-center border-t border-[#a5a5a5] pl-[3px] text-[11px] font-bold text-[#222]">
        <span className="w-[930px]">选择对象以自动判断矢量</span>
        <span>自动判断矢量 - Z 轴矢量方向</span>
      </footer>
      <div className="pointer-events-none absolute right-1 bottom-2 text-[36px] leading-[48px] text-white/75 [text-shadow:1px_1px_2px_#777] [font-family:'Liberation_Sans','Noto_Sans_CJK_SC',sans-serif]">
        CSDN @山涧果子
      </div>
    </div>
  );
}
